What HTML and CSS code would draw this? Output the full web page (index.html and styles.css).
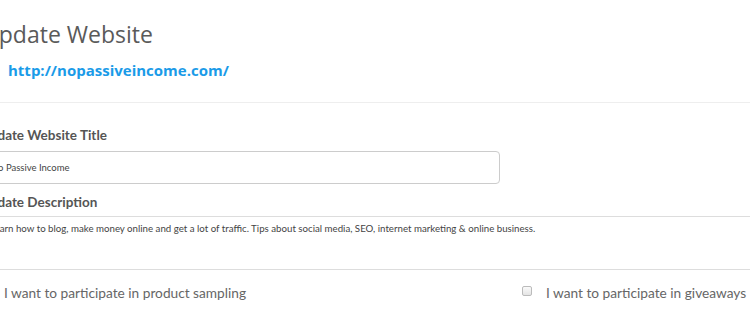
FILE: index.html
```html
<!DOCTYPE html>
<html lang="en">
<head>
    <meta charset="UTF-8">
    <title>Update Website</title>
    <link rel="stylesheet" href="styles.css">
</head>
<body>
<div class="panel">
    <div class="panel-head">
        <h2 class="site-title">Update Website</h2>
        <a class="site-url" href="#">http://nopassiveincome.com/</a>
    </div>
    <div class="panel-body">
        <label class="field-label" for="title">Update Website Title</label>
        <input class="field-input" id="title" type="text" value="No Passive Income">

        <label class="field-label" for="desc">Update Description</label>
        <textarea class="field-area" id="desc">Learn how to blog, make money online and get a lot of traffic. Tips about social media, SEO, internet marketing &amp; online business.</textarea>

        <div class="options">
            <label class="option"><input type="checkbox" class="check"> I want to participate in product sampling</label>
            <label class="option"><input type="checkbox" class="check"> I want to participate in giveaways</label>
        </div>
    </div>
</div>
</body>
</html>
```

FILE: styles.css
```css
* {
    margin: 0;
    padding: 0;
    box-sizing: border-box;
}

body {
    font-family: Lato, "Open Sans", sans-serif;
    color: #555;
    background: #fff;
    overflow: hidden;
}

.panel {
    width: 1100px;
    margin-left: -20px;
}

.panel-head {
    padding: 20px 0 22px 2px;
    border-bottom: 1px solid #eee;
}

.site-title {
    font-family: "Open Sans", sans-serif;
    font-size: 23px;
    font-weight: normal;
    color: #5a5a5a;
    line-height: 28px;
}

.site-url {
    display: block;
    margin: 12px 0 0 26px;
    font-family: "Open Sans", sans-serif;
    font-size: 15px;
    font-weight: bold;
    color: #1a9be8;
    text-decoration: none;
    line-height: 20px;
}

.panel-body {
    padding-top: 22px;
}

.field-label {
    display: block;
    font-size: 13.5px;
    font-weight: bold;
    color: #555;
    line-height: 20px;
}

.field-input {
    display: block;
    width: 520px;
    height: 33px;
    margin: 6px 0 8px;
    padding: 0 10px;
    border: 1px solid #ccc;
    border-radius: 4px;
    font-family: inherit;
    font-size: 9.5px;
    color: #444;
}

.field-area {
    display: block;
    width: 1000px;
    height: 54px;
    margin-top: 4px;
    padding: 5px 9px;
    border: 1px solid #ddd;
    font-family: inherit;
    font-size: 9.7px;
    color: #444;
    resize: none;
}

.options {
    display: flex;
    padding-top: 13px;
}

.option {
    display: flex;
    align-items: center;
    width: 542px;
    font-size: 13.7px;
    color: #666;
    line-height: 20px;
}

.check {
    appearance: none;
    width: 10px;
    height: 10px;
    margin: 0 14px 4px 0;
    border: 1px solid #bbb;
    border-radius: 2px;
    background: linear-gradient(#fafafa, #e4e4e4);
}
```
